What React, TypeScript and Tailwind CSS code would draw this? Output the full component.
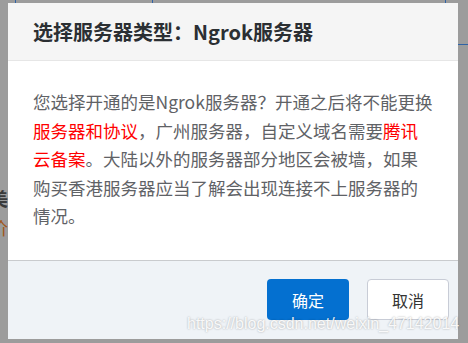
const FONT = "font-['Microsoft_YaHei','Noto_Sans_CJK_SC',sans-serif]";

function Backdrop() {
  // page behind the modal mask: just a few lines and clipped glyphs peeking out
  return (
    <div className="absolute inset-0 bg-[#9c9c9c]">
      <div className="absolute left-[15px] top-0 h-[4px] w-px bg-[#2f63a6]" />
      <div className="absolute left-[152px] top-0 h-[4px] w-px bg-[#2f63a6]" />
      <div className="absolute left-[445px] top-0 h-[4px] w-px bg-[#2f63a6]" />
      <div className="absolute left-[458px] top-[44px] h-px w-[10px] bg-[#2f63a6]" />
      <span className="absolute left-[-10px] top-[189px] text-[18px] font-bold leading-none text-[#3a3a3a]">
        美
      </span>
      <span className="absolute left-[-10px] top-[218px] text-[18px] leading-none text-[#a0581c]">
        价
      </span>
    </div>
  );
}

export default function App() {
  return (
    <div className={`relative h-[343px] w-[468px] overflow-hidden ${FONT}`}>
      <Backdrop />
      <div className="relative ml-[8px] mt-[3px] flex w-[450px] flex-col">
        <div className="flex h-[58px] items-center border-b border-[#e6e6e6] bg-[#f5f5f5] px-[25px]">
          <h2 className="text-[20px] font-bold leading-none text-[#2b2f33]">
            选择服务器类型：Ngrok服务器
          </h2>
        </div>
        <div className="h-[199px] bg-white px-[25px] pt-[27px] text-[17.5px] leading-[28.5px] text-[#5f6266]">
          <p className="whitespace-nowrap">您选择开通的是Ngrok服务器？开通之后将不能更换</p>
          <p className="whitespace-nowrap">
            <span className="text-[#ff0000]">服务器和协议</span>，广州服务器，自定义域名需要
            <span className="text-[#ff0000]">腾讯</span>
          </p>
          <p className="whitespace-nowrap">
            <span className="text-[#ff0000]">云备案</span>。大陆以外的服务器部分地区会被墙，如果
          </p>
          <p className="whitespace-nowrap">购买香港服务器应当了解会出现连接不上服务器的</p>
          <p className="whitespace-nowrap">情况。</p>
        </div>
        <div className="flex h-[79px] justify-end gap-[18px] border-t border-[#c9cbce] bg-[#eff3f7] pr-[9px] pt-[18px]">
          <button className="h-[41px] w-[82px] rounded-[4px] bg-[#0470d0] text-[16px] text-white">
            确定
          </button>
          <button className="h-[41px] w-[82px] rounded-[4px] border border-[#c8ccd6] bg-white text-[16px] text-[#333]">
            取消
          </button>
        </div>
      </div>
      <span className="absolute left-[187px] top-[316px] whitespace-nowrap font-['Liberation_Sans',sans-serif] text-[16px] leading-none text-white/90 [text-shadow:0_0_2px_rgba(0,0,0,0.35)]">
        https://blog.csdn.net/weixin_47142014
      </span>
    </div>
  );
}
